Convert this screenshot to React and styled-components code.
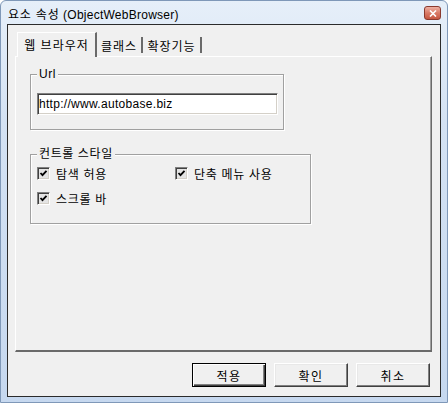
import React from "react";
import styled, { createGlobalStyle } from "styled-components";

const Global = createGlobalStyle`
  html, body { margin: 0; padding: 0; }
  body {
    width: 448px; height: 403px; overflow: hidden;
    font-family: "Liberation Sans", "Noto Sans CJK KR", sans-serif;
    font-size: 12px; color: #000;
  }
`;

const Window = styled.div`
  width: 448px;
  height: 403px;
  box-sizing: border-box;
  display: flex;
  flex-direction: column;
  background: linear-gradient(180deg, #e6eff9 0%, #d4e2f3 30%, #c6d8ef 100%);
  border: 1px solid #7f98b8;
  border-radius: 6px 6px 0 0;
`;

const TitleBar = styled.div`
  height: 23px;
  display: flex;
  align-items: center;
  justify-content: space-between;
  padding: 0 6px 0 7px;
  flex-shrink: 0;
`;

const Title = styled.span`
  font-size: 12px;
  color: #000;
  padding-top: 1px;
  letter-spacing: 0.25px;
`;

const Ko = styled.span`
  letter-spacing: 0.8px;
`;

const CloseBtn = styled.div`
  width: 15px;
  height: 12px;
  margin-top: 1px;
  border: 1px solid #8a3a2e;
  border-radius: 3px;
  background: linear-gradient(180deg, #eeb0a2 0%, #d97a66 50%, #c55640 100%);
  display: flex;
  align-items: center;
  justify-content: center;
`;

const Client = styled.div`
  flex: 1;
  margin: 0 6px 5px 6px;
  border: 1px solid #2b2b2b;
  background: #f0f0f0;
  display: flex;
  flex-direction: column;
  padding: 7px 8px 0 7px;
`;

const TabStrip = styled.div`
  display: flex;
  align-items: flex-end;
  height: 24px;
  padding-left: 2px;
  position: relative;
  z-index: 1;
`;

const Tab = styled.div`
  box-sizing: border-box;
  width: ${(p) => p.$w}px;
  display: flex;
  align-items: center;
  justify-content: center;
  padding-bottom: ${(p) => (p.$active ? "1px" : "0")};
  background: #f0f0f0;
  border-left: ${(p) => (p.$active ? "1px solid #fff" : "none")};
  border-top: ${(p) => (p.$active ? "1px solid #fff" : "none")};
  border-right: 2px solid #6a6a6a;
  margin-bottom: ${(p) => (p.$active ? "-1px" : "3px")};
  height: ${(p) => (p.$active ? "25px" : "16px")};
  white-space: nowrap;
  letter-spacing: 1px;
`;

const Panel = styled.div`
  height: 296px;
  box-sizing: border-box;
  border-top: 1px solid #fff;
  border-left: 1px solid #fff;
  border-right: 1px solid #6a6a6a;
  border-bottom: 2px solid #6a6a6a;
  box-shadow: inset -1px 0 #a0a0a0;
  padding: 17px 0 0 14px;
  display: flex;
  flex-direction: column;
  gap: 24px;
`;

const Group = styled.div`
  position: relative;
  box-sizing: border-box;
  width: ${(p) => p.$w}px;
  height: ${(p) => p.$h}px;
  border: 1px solid #a0a0a0;
  box-shadow: inset 1px 1px #fff, 1px 1px #fff;
  padding: ${(p) => p.$pad};
`;

const Legend = styled.span`
  position: absolute;
  top: -8px;
  left: 6px;
  padding: 0 2px;
  background: #f0f0f0;
  line-height: 14px;
  letter-spacing: 0.6px;
`;

const TextBox = styled.div`
  box-sizing: border-box;
  width: 241px;
  height: 22px;
  background: #fff;
  border-top: 1px solid #808080;
  border-left: 1px solid #808080;
  border-right: 1px solid #fff;
  border-bottom: 1px solid #fff;
  box-shadow: inset 1px 1px #404040, inset -1px -1px #d4d0c8;
  padding: 3px 0 0 1px;
  font-family: "Liberation Sans", sans-serif;
  font-size: 12px;
  letter-spacing: 0.3px;
`;

const CheckGrid = styled.div`
  display: grid;
  grid-template-columns: 138px auto;
  row-gap: 12px;
`;

const CheckItem = styled.label`
  display: flex;
  align-items: center;
  gap: 6px;
  height: 13px;
  white-space: nowrap;
  letter-spacing: 0.7px;
`;

const Box = styled.span`
  box-sizing: border-box;
  width: 13px;
  height: 13px;
  flex-shrink: 0;
  border-top: 1px solid #808080;
  border-left: 1px solid #808080;
  border-right: 1px solid #fff;
  border-bottom: 1px solid #fff;
  box-shadow: inset 1px 1px #404040, inset -1px -1px #d4d0c8;
  background: #e4e4e4;
  display: flex;
  align-items: center;
  justify-content: center;
`;

const ButtonRow = styled.div`
  display: flex;
  justify-content: flex-end;
  gap: 8px;
  margin-top: 11px;
  padding-right: 2px;
`;

const Button = styled.div`
  box-sizing: border-box;
  width: 74px;
  height: 24px;
  display: flex;
  align-items: center;
  justify-content: center;
  background: #f0f0f0;
  border: 1px solid;
  border-color: ${(p) => (p.$default ? "#000" : "#fff #404040 #404040 #fff")};
  box-shadow: ${(p) =>
    p.$default
      ? "inset 1px 1px #fff, inset -1px -1px #404040, inset -2px -2px #808080"
      : "inset -1px -1px #808080, inset 1px 1px #e8e8e8"};
  letter-spacing: 1.5px;
`;

const Check = () => (
  <Box>
    <svg width="9" height="9" viewBox="0 0 9 9">
      <path d="M1.5 4 L3.5 6.2 L7.5 1.8" fill="none" stroke="#000" strokeWidth="1.8" />
    </svg>
  </Box>
);

export default function App() {
  return (
    <>
      <Global />
      <Window>
        <TitleBar>
          <Title>
            <Ko>요소 속성</Ko> (ObjectWebBrowser)
          </Title>
          <CloseBtn>
            <svg width="8" height="7" viewBox="0 0 8 7">
              <path d="M1 0.5 L7 6.5 M7 0.5 L1 6.5" stroke="#fff" strokeWidth="1.6" />
            </svg>
          </CloseBtn>
        </TitleBar>
        <Client>
          <TabStrip>
            <Tab $active $w={80}>웹 브라우저</Tab>
            <Tab $w={46}>클래스</Tab>
            <Tab $w={59}>확장기능</Tab>
          </TabStrip>
          <Panel>
            <Group $w={254} $h={56} $pad="18px 0 0 6px">
              <Legend>Url</Legend>
              <TextBox>http://www.autobase.biz</TextBox>
            </Group>
            <Group $w={281} $h={70} $pad="12px 0 0 6px">
              <Legend>컨트롤 스타일</Legend>
              <CheckGrid>
                <CheckItem>
                  <Check />
                  탐색 허용
                </CheckItem>
                <CheckItem>
                  <Check />
                  단축 메뉴 사용
                </CheckItem>
                <CheckItem>
                  <Check />
                  스크롤 바
                </CheckItem>
              </CheckGrid>
            </Group>
          </Panel>
          <ButtonRow>
            <Button $default>적용</Button>
            <Button>확인</Button>
            <Button>취소</Button>
          </ButtonRow>
        </Client>
      </Window>
    </>
  );
}
